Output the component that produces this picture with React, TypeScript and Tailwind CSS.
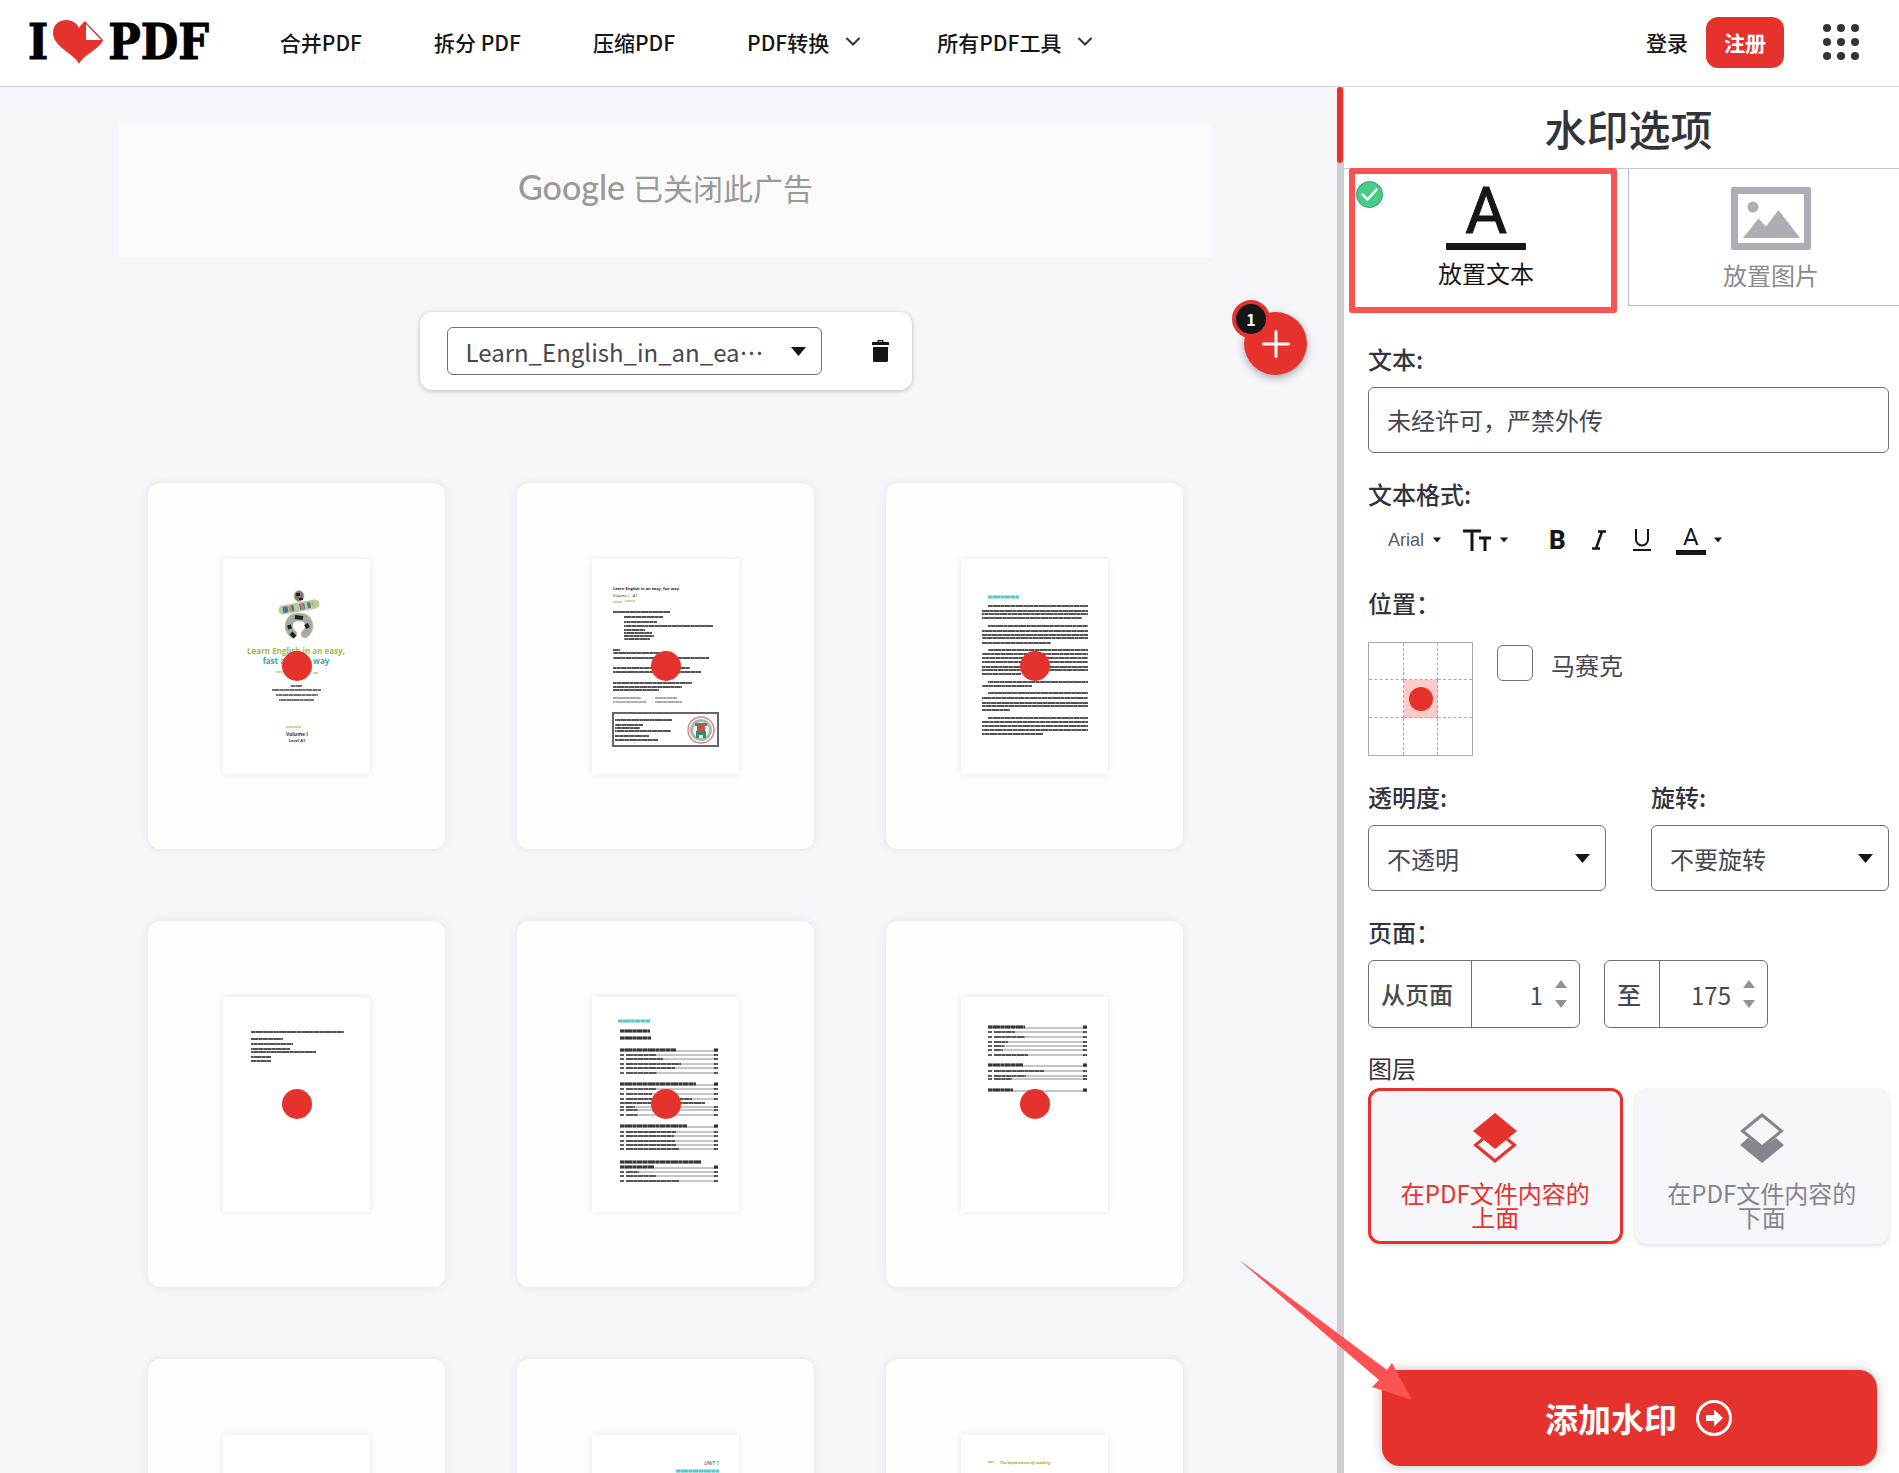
import React, { useState } from 'react';

type Row = [x1: number, x2: number, y: number];

interface TocRow {
  end: number;
  y: number;
  bold?: boolean;
  leader?: boolean;
}

const navLinks = ['合并PDF', '拆分 PDF', '压缩PDF'];
const navMenus = ['PDF转换', '所有PDF工具'];

const Caret = ({ className = 'w-[15px] h-[9px]' }: { className?: string }) => (
  <svg viewBox="0 0 15 9" className={className} fill="#161616" aria-hidden="true">
    <path d="M0 0h15L7.5 9z" />
  </svg>
);

const Logo = () => (
  <a href="#" aria-label="I love PDF" className="flex items-center gap-[5px] font-['DejaVu_Serif_Condensed','DejaVu_Serif',serif] text-[48px] leading-[48px] font-bold text-black [-webkit-text-stroke:1px_black]">
    <span>I</span>
    <svg viewBox="0 0 50 44" className="w-[50px] h-[44px]" aria-hidden="true">
      <path d="M26 44C22 34 0 27 0 13 0 5 6 0 13 0c6 0 11 3 13 8 1-2 3-4 6-7l18 19C47 29 31 34 26 44z" fill="#e5322d" />
      <path d="M33 4v16h15z" fill="#fff" />
    </svg>
    <span>PDF</span>
  </a>
);

const Header = () => (
  <header className="flex items-center h-[87px] shrink-0 border-b border-[#d6d6de] bg-white pl-[28px] pr-10 pb-[2px] text-[21px] leading-[30px] text-[#161616] font-medium">
    <Logo />
    <nav className="flex items-center ml-[71px] whitespace-nowrap">
      {navLinks.map((label) => (
        <a key={label} href="#" className="mr-[72px]">{label}</a>
      ))}
      {navMenus.map((label) => (
        <a key={label} href="#" className="flex items-center gap-4 mr-[76px]">
          {label}
          <svg viewBox="0 0 16 10" className="w-4 h-[10px]" fill="none" stroke="#33333b" strokeWidth="2" strokeLinecap="round" aria-hidden="true">
            <path d="M2 1.5l6 6 6-6" />
          </svg>
        </a>
      ))}
    </nav>
    <div className="flex items-center ml-auto whitespace-nowrap">
      <a href="#">登录</a>
      <a href="#" className="ml-[18px] flex items-center justify-center w-[78px] h-[51px] rounded-xl bg-[#e5322d] text-white font-bold">注册</a>
      <button type="button" aria-label="更多" className="ml-[39px]">
        <svg viewBox="0 0 36 36" className="w-9 h-9" fill="#33333b">
          {[4, 18, 32].map((y) => [4, 18, 32].map((x) => <circle key={`${x}-${y}`} cx={x} cy={y} r="4" />))}
        </svg>
      </button>
    </div>
  </header>
);

// Lines of body copy, too small to read at thumbnail size
const Rows = ({ rows, weight = 2, color = '#222' }: { rows: Row[]; weight?: number; color?: string }) => (
  <>
    {rows.map(([x1, x2, y], i) => (
      <g key={i} stroke={color} strokeWidth={weight}>
        <path d={`M${x1} ${y}H${x2}`} opacity="0.55" />
        <path d={`M${x1} ${y}H${x2}`} strokeDasharray="4 1 7 1 3 1 5 1" strokeDashoffset={i * 5} opacity="0.5" />
      </g>
    ))}
  </>
);

const Toc = ({ rows, x = 28 }: { rows: TocRow[]; x?: number }) => (
  <>
    {rows.map(({ end, y, bold, leader = true }) => (
      <g key={y}>
        {leader && <path d={`M${end} ${y + (bold ? 1 : 0)}H126`} stroke="#8a8a8a" strokeWidth="1" />}
        {bold ? (
          <Rows rows={leader ? [[x, end, y], [122, 126, y]] : [[x, end, y]]} weight={3} color="#000" />
        ) : (
          <Rows rows={leader ? [[x, x + 4, y], [x + 6, end, y], [122, 126, y]] : [[x, end, y]]} weight={1.8} />
        )}
      </g>
    ))}
  </>
);

const CoverPage = () => (
  <>
    <ellipse cx="76" cy="37" rx="5" ry="5.5" fill="#777" stroke="#b8cf8e" />
    <path d="M73 34h4v3h-4zM76 39h4v2h-4z" fill="#222" />
    <path d="M70 75c-7-6-5-17 6-17s13 11 6 17" fill="none" stroke="#b8cf8e" strokeWidth="8.5" strokeLinecap="round" />
    <path d="M70 75c-7-6-5-17 6-17s13 11 6 17" fill="none" stroke="#a4a9a6" strokeWidth="7" strokeLinecap="round" />
    <path d="M68 74l4 4M72 58l8 1M83 65l2 4M66 66l1 4" fill="none" stroke="#1f2422" strokeWidth="4" />
    <path d="M60 51l32-6" stroke="#b8cf8e" strokeWidth="9" strokeLinecap="round" />
    <path d="M60 51l32-6" stroke="#3f74a8" strokeWidth="6" strokeDasharray="5 3 3 6" />
    <path d="M66 50l24-5" stroke="#e0709e" strokeWidth="5" strokeDasharray="3 9" />
    <g fontFamily="Open Sans, sans-serif" fontWeight="700" textAnchor="middle">
      <text x="73" y="95" fontSize="8" fill="#9db83c">Learn English in an easy,</text>
      <text x="73" y="105" fontSize="8" fill="#2fae9f">fast and fun way</text>
      <text x="74" y="177" fontSize="5" fill="#333">Volume I</text>
      <text x="74" y="183" fontSize="4" fill="#333">Level A1</text>
    </g>
    <Rows rows={[[53, 60, 113], [90, 95, 114], [63, 78, 168]]} weight={1.6} color="#b3c46a" />
    <Rows rows={[[68, 79, 127], [49, 98, 131], [53, 95, 136], [56, 91, 141]]} weight={1.5} />
  </>
);

const CreditsPage = () => (
  <>
    <text x="21" y="31" fontSize="4" fontWeight="700" fontFamily="Open Sans, sans-serif" fill="#222">Learn English in an easy, fun way</text>
    <text x="21" y="38" fontSize="4" fontFamily="Open Sans, sans-serif" fill="#222">Volume I - A1</text>
    <Rows rows={[[21, 30, 43], [33, 43, 42]]} weight={1.5} color="#b3c46a" />
    <Rows
      rows={[
        [21, 78, 53], [32, 71, 58], [32, 65, 63], [32, 121, 67], [32, 53, 71], [32, 60, 74], [32, 62, 77], [32, 58, 80],
        [21, 28, 91], [21, 67, 94], [21, 117, 99], [21, 98, 109], [21, 109, 113], [21, 100, 124], [21, 90, 128], [21, 67, 131],
        [23, 80, 161], [23, 51, 166], [23, 48, 169], [23, 79, 172], [23, 57, 177], [23, 66, 181],
      ]}
    />
    <Rows rows={[[21, 49, 139], [63, 85, 139], [21, 54, 143], [63, 90, 143]]} weight={1.2} color="#555" />
    <rect x="21" y="154" width="105" height="33" fill="none" stroke="#666" strokeWidth="2" />
    <circle cx="109" cy="171" r="13" fill="#fff" stroke="#e58484" strokeWidth="1.5" />
    <circle cx="109" cy="171" r="9.5" fill="#eef5f1" stroke="#9dbfae" strokeWidth="3" />
    <path d="M103 164h12v3h-12z" fill="#8a6f5b" />
    <path d="M105 167h8v5h-8z" fill="#c94f4f" />
    <path d="M104 172h10v7h-3v-3h-4v3h-3z" fill="#2f8f63" />
  </>
);

const IntroPage = () => (
  <>
    <Rows rows={[[27, 58, 38]]} weight={3} color="#2cbcc0" />
    <Rows
      rows={[
        [27, 127, 47], [21, 127, 52], [21, 127, 55], [21, 121, 59],
        [27, 127, 67], [21, 127, 72], [21, 127, 76], [21, 127, 79], [21, 90, 84],
        [27, 127, 91], [21, 127, 95], [21, 127, 99], [21, 127, 103], [21, 127, 108], [21, 127, 111], [21, 60, 115],
        [27, 127, 123], [21, 71, 127],
        [27, 127, 134], [21, 127, 139], [21, 127, 144], [21, 127, 147], [21, 49, 151],
        [27, 127, 159], [21, 127, 163], [21, 127, 167], [21, 127, 171], [21, 82, 175],
      ]}
    />
  </>
);

const ContentsPage = () => (
  <>
    <Rows rows={[[26, 58, 24]]} weight={3} color="#2cbcc0" />
    <Toc
      rows={[
        { end: 58, y: 34, bold: true, leader: false },
        { end: 59, y: 41, bold: true, leader: false },
        { end: 84, y: 53, bold: true },
        { end: 64, y: 58 }, { end: 71, y: 62 }, { end: 89, y: 67 }, { end: 83, y: 71 }, { end: 65, y: 76 },
        { end: 104, y: 87, bold: true },
        { end: 64, y: 92 }, { end: 60, y: 97 }, { end: 100, y: 102 }, { end: 113, y: 106, leader: false },
        { end: 43, y: 110 }, { end: 46, y: 113 }, { end: 46, y: 118 },
        { end: 95, y: 129, bold: true },
        { end: 84, y: 135 }, { end: 82, y: 139 }, { end: 83, y: 144 }, { end: 84, y: 148 }, { end: 87, y: 152 },
        { end: 109, y: 165, bold: true, leader: false },
        { end: 62, y: 170, bold: true },
        { end: 47, y: 175 }, { end: 64, y: 179 }, { end: 87, y: 184 },
      ]}
    />
  </>
);

const ContentsEndPage = () => (
  <Toc
    x={27}
    rows={[
      { end: 64, y: 30, bold: true },
      { end: 54, y: 35 }, { end: 64, y: 40 }, { end: 47, y: 45 }, { end: 43, y: 49 }, { end: 42, y: 53 }, { end: 67, y: 58 },
      { end: 62, y: 68, bold: true },
      { end: 83, y: 74 }, { end: 65, y: 79 }, { end: 51, y: 82 },
      { end: 52, y: 93, bold: true },
    ]}
  />
);

const pages: React.ReactNode[] = [
  <CoverPage />,
  <CreditsPage />,
  <IntroPage />,
  <Rows rows={[[28, 121, 35], [28, 60, 42], [28, 70, 47], [28, 67, 52], [28, 93, 55], [28, 48, 60], [28, 48, 64]]} />,
  <ContentsPage />,
  <ContentsEndPage />,
  null,
  <>
    <text x="127" y="30" fontSize="5" fontStyle="italic" textAnchor="end" fontFamily="Open Sans, sans-serif" fill="#333">UNIT 1</text>
    <Rows rows={[[84, 127, 36]]} weight={3} color="#2cbcc0" />
  </>,
  <>
    <Rows rows={[[27, 33, 27]]} weight={1.5} color="#a9ad2c" />
    <text x="39" y="29" fontSize="4" fontWeight="700" fontStyle="italic" fontFamily="Open Sans, sans-serif" fill="#a9ad2c">The Importance of reading</text>
  </>,
];

const Workspace = () => (
  <main className="flex-1 min-w-0 overflow-hidden bg-[#f5f5fa] pt-9 pr-[6px]">
    <div className="w-full max-w-[1093px] h-[135px] mx-auto flex items-center justify-center gap-2 bg-[#fafafa] pb-2 text-[#999]">
      <span className="font-['Lato',sans-serif] text-[34px] leading-[40px] font-medium">Google</span>
      <span className="text-[30px] leading-[40px]">已关闭此广告</span>
    </div>

    <div className="relative mt-[54px]">
      <div className="w-[492px] h-[78px] mx-auto flex items-center justify-between rounded-xl bg-white pl-[27px] pr-[22px] shadow-[0_1px_4px_rgba(0,0,0,0.25)]">
        <div className="relative">
          <select
            aria-label="文件"
            className="appearance-none w-[375px] h-12 rounded-md border border-[#707078] bg-white pl-[18px] pr-8 pt-[2px] text-[24px] leading-[36px] text-[#47474f]"
          >
            <option>Learn_English_in_an_ea⋯</option>
          </select>
          <Caret className="absolute right-4 top-5 w-[15px] h-[9px] pointer-events-none" />
        </div>
        <button type="button" aria-label="删除" className="p-px">
          <svg viewBox="0 0 17 22" className="w-[17px] h-[22px]" fill="#161616">
            <path d="M5.500 2V1c0-.6.4-1 1-1h4c.6 0 1 .4 1 1v1H16c.6 0 1 .4 1 1v2H0V3c0-.6.400-1 1-1zM7 2h3v-.8H7zM1 7h15v13.500c0 .8-.7 1.500-1.500 1.500h-12C1.700 22 1 21.300 1 20.500z" />
          </svg>
        </button>
      </div>
      <button type="button" aria-label="添加文件" className="absolute top-0 right-[24px] w-[63px] h-[63px] rounded-full bg-[#e5322d] shadow-[0_3px_8px_rgba(0,0,0,0.3)]">
        <svg viewBox="0 0 28 28" className="w-7 h-7 mx-auto" stroke="#fff" strokeWidth="3" strokeLinecap="round" aria-hidden="true">
          <path d="M14 1.500v25M1.500 14h25" />
        </svg>
        <span className="absolute -top-3 -left-3 w-[38px] h-[38px] flex items-center justify-center rounded-full border-4 border-[#e5322d] bg-[#161616] text-white text-[16px] leading-[24px] font-bold">1</span>
      </button>
    </div>

    <div className="grid grid-cols-[repeat(3,297px)] justify-center gap-[72px] mt-[93px]">
      {pages.map((page, i) => (
        <div key={i} className="relative h-[366px] flex items-center justify-center rounded-xl bg-[#fdfdfd] shadow-[0_0_10px_rgba(0,0,0,0.08)]">
          <svg viewBox="0 0 147 215" className="w-[147px] h-[215px] bg-white shadow-[0_0_6px_rgba(0,0,0,0.1)]" role="img" aria-label={`第 ${i + 1} 页`}>
            {page}
          </svg>
          <span className="absolute inset-0 m-auto w-[30px] h-[30px] rounded-full bg-[#e5322d]" />
        </div>
      ))}
    </div>
  </main>
);

const labelClass = 'block text-[24px] leading-[34px] text-[#33333b]';
const fieldClass = 'w-full h-[66px] rounded-md border border-[#707078] bg-white px-[18px] text-[24px] leading-[36px] text-[#47474f]';

const SelectField = ({ id, label, value }: { id: string; label: string; value: string }) => (
  <div>
    <label htmlFor={id} className={`${labelClass} font-medium mb-[11px]`}>{label}</label>
    <div className="relative">
      <select id={id} className={`${fieldClass} appearance-none pt-[2px]`}>
        <option>{value}</option>
      </select>
      <Caret className="absolute right-4 top-[29px] w-[15px] h-[9px] pointer-events-none" />
    </div>
  </div>
);

const NumberField = ({ id, label, initial, width }: { id: string; label: string; initial: number; width: string }) => {
  const [value, setValue] = useState(initial);

  return (
    <div className={`${width} h-[68px] flex items-center rounded-md border border-[#707078] text-[24px] leading-[36px] text-[#47474f]`}>
      <label htmlFor={id} className="h-full flex items-center shrink-0 border-r border-[#707078] pl-3 pr-[18px] font-medium">{label}</label>
      <input
        id={id}
        type="number"
        value={value}
        onChange={(e) => setValue(Number(e.target.value))}
        className="flex-1 min-w-0 h-full text-right [appearance:textfield] [&::-webkit-inner-spin-button]:appearance-none"
      />
      <span className="flex flex-col gap-3 ml-3 mr-3">
        <button type="button" aria-label="增加" onClick={() => setValue(value + 1)}>
          <svg viewBox="0 0 12 8" className="block w-3 h-2" fill="#929292"><path d="M6 0l6 8H0z" /></svg>
        </button>
        <button type="button" aria-label="减少" onClick={() => setValue(value - 1)}>
          <svg viewBox="0 0 12 8" className="block w-3 h-2" fill="#929292"><path d="M6 8l6-8H0z" /></svg>
        </button>
      </span>
    </div>
  );
};

const Toolbar = () => (
  <div className="flex items-center h-11 mt-[7px] pl-5 text-[#161616] font-['Liberation_Sans',Arial,sans-serif]">
    <button type="button" className="flex items-center gap-[9px] text-[18px] leading-[24px] text-[#5a5a62]">
      Arial
      <Caret className="w-2 h-[6px]" />
    </button>
    <button type="button" aria-label="字号" className="flex items-center gap-[9px] ml-[22px]">
      <svg viewBox="0 0 28 22" className="w-7 h-[22px]" fill="none" stroke="#161616" strokeWidth="3">
        <path d="M0 2h18M9 2v20M16 9h12M22 9v13" />
      </svg>
      <Caret className="w-2 h-[6px]" />
    </button>
    <button type="button" className="ml-[41px] font-['Roboto',sans-serif] text-[26px] leading-[30px] font-extrabold">B</button>
    <button type="button" aria-label="斜体" className="ml-[26px]">
      <svg viewBox="0 0 14 20" className="w-[14px] h-5" fill="none" stroke="#161616" strokeWidth="2.5">
        <path d="M6 1.500h8M0 18.500h8M10 1.500L4 18.500" />
      </svg>
    </button>
    <button type="button" aria-label="下划线" className="ml-[26px]">
      <svg viewBox="0 0 20 24" className="w-5 h-6" fill="none" stroke="#161616" strokeWidth="2">
        <path d="M4 1v10.500a6 6 0 0 0 12 0V1M1 22h18" />
      </svg>
    </button>
    <button type="button" className="flex items-center gap-2 ml-6 font-['Roboto',sans-serif]">
      <span className="w-[30px] border-b-[5px] border-[#161616] pb-px text-[24px] leading-[24px]">A</span>
      <Caret className="w-2 h-[6px]" />
    </button>
  </div>
);

const PositionGrid = () => {
  const [active, setActive] = useState(4);

  return (
    <div className="w-[105px] h-[114px] grid grid-cols-[35px_34px_34px] grid-rows-[37px_38px_37px] border border-[#a9a9b1]" role="group" aria-label="位置">
      {Array.from({ length: 9 }, (_, i) => (
        <button
          key={i}
          type="button"
          aria-label={`位置 ${i + 1}`}
          onClick={() => setActive(i)}
          className={`flex items-center justify-center border-dashed border-[#a9a9b1] ${i % 3 < 2 ? 'border-r' : ''} ${i < 6 ? 'border-b' : ''} ${i === active ? 'bg-[#fecaca]' : ''}`}
        >
          {i === active && <span className="w-6 h-6 rounded-full bg-[#e5322d]" />}
        </button>
      ))}
    </div>
  );
};

const LayerIcon = ({ over }: { over: boolean }) => (
  <svg viewBox="0 0 44 50" className="w-11 h-[50px]" aria-hidden="true">
    {over ? (
      <>
        <path d="M10 26L2.500 32 22 48l19.500-16-7.500-6" fill="none" stroke="#e5322d" strokeWidth="3" />
        <path d="M22 0l22 18-22 18L0 18z" fill="#e5322d" />
      </>
    ) : (
      <>
        <path d="M8 25l-8 7 22 18 22-18-8-7-14 10z" fill="#85858d" />
        <path d="M22 2l19.500 16L22 34 2.500 18z" fill="#f5f5fa" stroke="#85858d" strokeWidth="3" />
      </>
    )}
  </svg>
);

const layerBase = 'flex-1 h-[156px] flex flex-col items-center rounded-xl border-[3px] bg-[#f5f5fa] px-6 pt-[22px] text-[24px] leading-[24px] shadow-[0_2px_4px_rgba(0,0,0,0.12)]';

const OptionsPanel = () => (
  <aside className="w-[569px] -mr-[14px] shrink-0 flex flex-col bg-white">
    <h1 className="h-[82px] flex items-center justify-center border-b border-[#c4c4cc] text-[42px] leading-[60px] font-medium text-[#33333b]">水印选项</h1>

    <div className="grid grid-cols-[284px_1fr] h-[137px] text-[24px] leading-[36px]">
      <button type="button" className="relative flex flex-col items-center pt-[18px] text-[#161616]">
        <svg viewBox="0 0 80 64" className="w-20 h-[64px] overflow-visible" fill="#161616" aria-hidden="true">
          <text x="40" y="46" textAnchor="middle" fontFamily="Roboto, sans-serif" fontWeight="400" fontSize="64" stroke="#161616">A</text>
          <rect y="56" width="80" height="7" rx="1" />
        </svg>
        <span className="mt-1">放置文本</span>
        <svg viewBox="0 0 27 27" className="absolute top-3 left-3 w-[27px] h-[27px]" aria-hidden="true">
          <circle cx="13.500" cy="13.500" r="13" fill="#48cc85" stroke="#2f9e62" />
          <path d="M6.500 13.500l5 5 9-10" fill="none" stroke="#fff" strokeWidth="2.500" strokeLinecap="round" />
        </svg>
        {/* highlight frame */}
        <span className="absolute -top-px left-[5px] w-[268px] h-[145px] rounded-[3px] border-[6px] border-[#fc5252]" />
      </button>
      <button type="button" className="flex flex-col items-center border-l border-b border-[#bcbcc2] pt-[18px] text-[#8a8a92]">
        <svg viewBox="0 0 80 63" className="w-20 h-[63px]" fill="#adadb5" aria-hidden="true">
          <path d="M2 0h76a2 2 0 0 1 2 2v59a2 2 0 0 1-2 2H2a2 2 0 0 1-2-2V2a2 2 0 0 1 2-2zm5 7v49h66V7z" fillRule="evenodd" />
          <circle cx="22" cy="20" r="5.500" />
          <path d="M12 51l15.500-19.500L35 39.500 47.500 23 69 51z" />
        </svg>
        <span className="mt-[7px]">放置图片</span>
      </button>
    </div>

    <form className="flex-1 flex flex-col pt-9" onSubmit={(e) => e.preventDefault()}>
      <div className="flex flex-col gap-6 px-6">
        <div>
          <label htmlFor="text" className={`${labelClass} font-medium mb-[11px]`}>文本:</label>
          <input id="text" type="text" defaultValue="未经许可，严禁外传" className={`${fieldClass} pb-[2px]`} />
        </div>

        <div>
          <span className={`${labelClass} font-medium`}>文本格式:</span>
          <Toolbar />
        </div>

        <div>
          <span className={`${labelClass} font-medium mb-[22px]`}>位置：</span>
          <div className="flex items-start">
            <PositionGrid />
            <input id="mosaic" type="checkbox" className="appearance-none w-9 h-9 mt-[3px] ml-6 rounded-md border border-[#707078] bg-white" />
            <label htmlFor="mosaic" className="mt-[5px] ml-[18px] text-[24px] leading-[36px] text-[#47474f]">马赛克</label>
          </div>
        </div>

        <div className="grid grid-cols-2 gap-[45px]">
          <SelectField id="opacity" label="透明度:" value="不透明" />
          <SelectField id="rotation" label="旋转:" value="不要旋转" />
        </div>

        <div>
          <span className={`${labelClass} font-medium mb-[11px]`}>页面：</span>
          <div className="flex gap-6">
            <NumberField id="from" label="从页面" initial={1} width="w-[212px]" />
            <NumberField id="to" label="至" initial={175} width="w-[164px]" />
          </div>
        </div>

        <div>
          <span className="block mb-1 text-[24px] leading-[32px] text-[#33333b]">图层</span>
          <div className="flex gap-3">
            <button type="button" className={`${layerBase} border-[#e5322d] text-[#e5322d]`}>
              <LayerIcon over />
              <span className="mt-[18px]">在PDF文件内容的上面</span>
            </button>
            <button type="button" className={`${layerBase} border-transparent text-[#85858d]`}>
              <LayerIcon over={false} />
              <span className="mt-[18px]">在PDF文件内容的下面</span>
            </button>
          </div>
        </div>
      </div>

      <div className="relative mt-auto ml-[38px] mr-9 mb-[7px]">
        <button type="submit" className="w-full h-24 flex items-center justify-center gap-[19px] rounded-[18px] bg-[#e5322d] pl-[18px] text-[33px] leading-[48px] font-bold text-white shadow-[0_0_12px_rgba(0,0,0,0.25)]">
          添加水印
          <svg viewBox="0 0 36 36" className="w-9 h-9" fill="none" aria-hidden="true">
            <circle cx="18" cy="18" r="16.500" stroke="#fff" strokeWidth="3" />
            <path d="M10 15h8v-5.500l9 8.500-9 8.500V21h-8z" fill="#fff" />
          </svg>
        </button>
        {/* pointer arrow */}
        <svg viewBox="0 0 173 139" className="absolute right-[464px] -top-[109px] w-[173px] h-[139px] pointer-events-none" fill="#fc5252" aria-hidden="true">
          <path d="M0 0l2 1 145 108 5-7 20 37-40-13 7-7z" />
        </svg>
      </div>
    </form>
  </aside>
);

export default function App() {
  return (
    <div lang="zh-CN" className="h-screen flex flex-col overflow-hidden font-['Noto_Sans_CJK_SC',sans-serif]">
      <Header />
      <div className="flex-1 min-h-0 flex">
        <Workspace />
        <div className="w-[7px] shrink-0 bg-[#cdcdd2]">
          <div className="w-[6px] h-[76px] rounded-full bg-[#e5322d]" />
        </div>
        <OptionsPanel />
      </div>
    </div>
  );
}
